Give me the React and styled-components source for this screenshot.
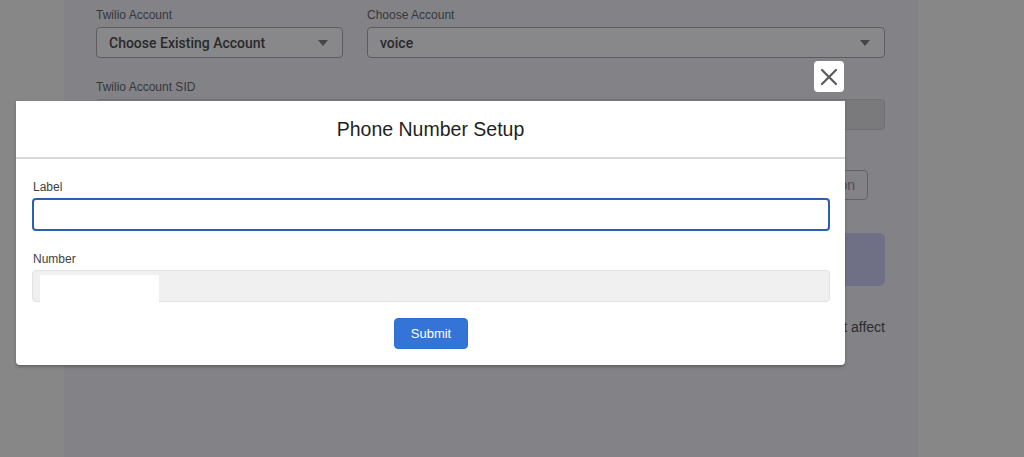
import React from 'react';
import styled, { createGlobalStyle } from 'styled-components';

const GlobalStyle = createGlobalStyle`
  html, body {
    margin: 0;
    padding: 0;
    height: 457px;
    overflow: hidden;
    background: #878787;
    font-family: 'Liberation Sans', Arial, sans-serif;
  }
  * {
    box-sizing: border-box;
  }
`;

const Screen = styled.div`
  position: relative;
  width: 1024px;
  height: 457px;
  background: #878787;
  display: flex;
  justify-content: flex-start;
`;

const Panel = styled.main`
  margin-left: 64px;
  width: 854px;
  height: 457px;
  background: #838287;
  padding: 7px 33px 0 32px;
  display: flex;
  flex-direction: column;
`;

const FieldRow = styled.div`
  display: grid;
  grid-template-columns: ${(p) => p.columns || '1fr'};
  gap: 24px;
  margin-bottom: ${(p) => p.spacing || 21}px;
`;

const Field = styled.div`
  display: flex;
  flex-direction: column;
`;

const FieldLabel = styled.label`
  font-size: 12px;
  line-height: 16px;
  color: #38383a;
  margin-bottom: 4px;
`;

const Select = styled.div`
  height: 31px;
  border: 1px solid #5d5d60;
  border-radius: 4px;
  background: #88888a;
  padding: 0 14px 0 12px;
  display: flex;
  align-items: center;
  justify-content: space-between;
  font-family: Roboto, 'Liberation Sans', sans-serif;
  font-size: 14px;
  font-weight: 500;
  color: #2a2a2c;
`;

const Caret = styled.span`
  width: 0;
  height: 0;
  border-left: 5px solid transparent;
  border-right: 5px solid transparent;
  border-top: 6px solid #454548;
`;

const DisabledInput = styled.div`
  height: 31px;
  border: 1px solid #707073;
  border-radius: 4px;
  background: #7a7a7c;
`;

const ActionRow = styled.div`
  display: flex;
  justify-content: flex-end;
  padding-right: 17px;
  margin: 19px 0 33px;
`;

const GhostButton = styled.button`
  height: 30px;
  padding: 0 12px 0 10px;
  border: 1px solid #626265;
  border-radius: 4px;
  background: #838287;
  color: #4c4c50;
  font-family: inherit;
  font-size: 14px;
`;

const Banner = styled.div`
  height: 53px;
  border-radius: 6px;
  background: #6f6f86;
`;

const Note = styled.p`
  margin: 33px 0 0;
  text-align: right;
  font-size: 14px;
  color: #2c2c2e;
`;

const ModalLayer = styled.div`
  position: absolute;
  top: 101px;
  left: 16px;
  width: 829px;
`;

const CloseButton = styled.button`
  position: absolute;
  top: -40px;
  right: 1px;
  width: 30px;
  height: 31px;
  border: none;
  border-radius: 4px;
  background: #ffffff;
  padding: 0;
  display: flex;
  align-items: center;
  justify-content: center;
`;

const Modal = styled.section`
  background: #ffffff;
  border-radius: 0 0 4px 4px;
  box-shadow: 0 2px 3px rgba(0, 0, 0, 0.25);
`;

const ModalHeader = styled.header`
  height: 58px;
  border-bottom: 2px solid #d9d9db;
  display: flex;
  align-items: center;
  justify-content: center;
`;

const ModalTitle = styled.h2`
  margin: 0;
  font-size: 19.5px;
  font-weight: 400;
  color: #1f1f21;
`;

const ModalBody = styled.div`
  padding: 20px 15px 16px 16px;
  display: flex;
  flex-direction: column;
`;

const ModalField = styled.div`
  display: flex;
  flex-direction: column;
  margin-bottom: ${(p) => p.spacing || 0}px;
`;

const ModalLabel = styled.label`
  font-size: 12px;
  line-height: 16px;
  color: #3e3e40;
  margin: 0 0 3px 1px;
`;

const TextInput = styled.input`
  height: ${(p) => (p.disabled ? 32 : 33)}px;
  border-radius: 4px;
  border: ${(p) => (p.disabled ? '1px solid #e2e2e4' : '2px solid #2d5fae')};
  background: ${(p) => (p.disabled ? '#f0f0f1' : '#ffffff')};
  outline: none;
  font-family: inherit;
  font-size: 14px;
  padding: 0 10px;
`;

const MaskedWrap = styled.div`
  position: relative;
  display: flex;
  flex-direction: column;
`;

const Mask = styled.span`
  position: absolute;
  left: 8px;
  top: 5px;
  width: 119px;
  height: 27px;
  background: #ffffff;
`;

const Footer = styled.div`
  display: flex;
  justify-content: center;
`;

const SubmitButton = styled.button`
  width: 74px;
  height: 31px;
  border: 1px solid #2f6fd2;
  border-radius: 4px;
  background: #3474d6;
  color: #ffffff;
  font-family: inherit;
  font-size: 13px;
`;

const CloseIcon = () => (
  <svg width="18" height="18" viewBox="0 0 18 18">
    <path d="M2 2 L16 16 M16 2 L2 16" stroke="#5a5a5c" strokeWidth="2.2" strokeLinecap="round" />
  </svg>
);

const App = () => (
  <Screen>
    <GlobalStyle />
    <Panel>
      <FieldRow columns="247px 1fr">
        <Field>
          <FieldLabel>Twilio Account</FieldLabel>
          <Select>
            Choose Existing Account
            <Caret />
          </Select>
        </Field>
        <Field>
          <FieldLabel>Choose Account</FieldLabel>
          <Select>
            voice
            <Caret />
          </Select>
        </Field>
      </FieldRow>
      <FieldRow spacing={0}>
        <Field>
          <FieldLabel>Twilio Account SID</FieldLabel>
          <DisabledInput />
        </Field>
      </FieldRow>
      <ActionRow>
        <GhostButton>Save Configuration</GhostButton>
      </ActionRow>
      <Banner />
      <Note>Changing the number here will not affect</Note>
    </Panel>

    <ModalLayer>
      <CloseButton aria-label="Close">
        <CloseIcon />
      </CloseButton>
      <Modal>
        <ModalHeader>
          <ModalTitle>Phone Number Setup</ModalTitle>
        </ModalHeader>
        <ModalBody>
          <ModalField spacing={20}>
            <ModalLabel>Label</ModalLabel>
            <TextInput />
          </ModalField>
          <ModalField spacing={16}>
            <ModalLabel>Number</ModalLabel>
            <MaskedWrap>
              <TextInput disabled />
              <Mask />
            </MaskedWrap>
          </ModalField>
          <Footer>
            <SubmitButton>Submit</SubmitButton>
          </Footer>
        </ModalBody>
      </Modal>
    </ModalLayer>
  </Screen>
);

export default App;
